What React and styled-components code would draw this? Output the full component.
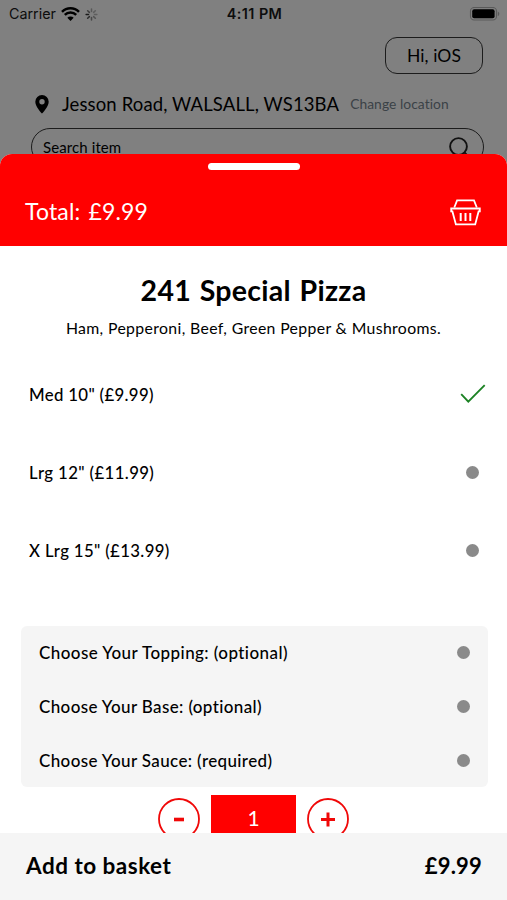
import styled, { createGlobalStyle } from 'styled-components';

const GlobalStyle = createGlobalStyle`
  * {
    box-sizing: border-box;
  }
  body {
    margin: 0;
    background: #808080;
  }
`

const Screen = styled.div`
  width: 507px;
  height: 900px;
  display: flex;
  flex-direction: column;
  overflow: hidden;
  background: #808080;
  color: #000;
  font-family: Lato, "Open Sans", sans-serif;
`

const Text = styled.span`
  font-size: ${p => p.$size}px;
  font-weight: ${p => p.$weight || 400};
  letter-spacing: ${p => p.$spacing || 0}px;
  word-spacing: ${p => p.$words || 0}px;
  line-height: 1.2;
  white-space: nowrap;
`

// dimmed page behind the sheet
const Backdrop = styled.div`
  height: 154px;
  flex: none;
  overflow: hidden;
  display: flex;
  flex-direction: column;
`

const StatusBar = styled.div`
  height: 28px;
  flex: none;
  padding: 0 7px 0 9px;
  display: grid;
  grid-template-columns: 1fr auto 1fr;
  align-items: center;
  font-family: Inter, sans-serif;
  color: #0d0d0d;
  svg {
    display: block;
  }
`

const Carrier = styled.div`
  display: flex;
  align-items: center;
  gap: 5px;
`

const Battery = styled.div`
  display: flex;
  justify-content: flex-end;
`

const Greeting = styled.div`
  width: 98px;
  height: 37px;
  flex: none;
  margin: 9px 24px 0 auto;
  border: 1.5px solid #1c1c1c;
  border-radius: 12px;
  display: flex;
  align-items: center;
  justify-content: center;
`

const Location = styled.div`
  height: 24px;
  flex: none;
  margin: 18px 0 0 35px;
  display: flex;
  align-items: center;
  svg {
    margin-right: 13px;
  }
`

const ChangeLink = styled(Text)`
  margin-left: 11px;
  color: #3b4247;
`

const Search = styled.div`
  width: 453px;
  height: 38px;
  flex: none;
  margin: 12px 0 0 31px;
  padding: 0 13px 0 11px;
  border: 1.5px solid #1c1c1c;
  border-radius: 19px;
  display: flex;
  align-items: center;
  justify-content: space-between;
`

const Placeholder = styled(Text)`
  line-height: 12px;
`

const Sheet = styled.div`
  flex: 1;
  min-height: 0;
  display: flex;
  flex-direction: column;
  border-radius: 12px 12px 0 0;
  overflow: hidden;
  background: #fff;
`

const SheetHeader = styled.div`
  height: 92px;
  flex: none;
  display: flex;
  flex-direction: column;
  align-items: center;
  padding-top: 9px;
  background: #f00;
  color: #fff;
`

const Handle = styled.div`
  width: 92px;
  height: 7px;
  border-radius: 4px;
  background: #fff;
`

const TotalRow = styled.div`
  width: 100%;
  height: 34px;
  margin-top: 25px;
  padding: 0 26px 0 25px;
  display: flex;
  align-items: center;
  justify-content: space-between;
`

const Content = styled.div`
  flex: 1;
  min-height: 0;
  overflow: hidden;
  display: flex;
  flex-direction: column;
`

const Intro = styled.div`
  height: 109px;
  flex: none;
  padding-top: 27px;
  display: flex;
  flex-direction: column;
  align-items: center;
  gap: 12px;
`

const Size = styled.div`
  height: 78px;
  flex: none;
  padding: 0 21px 0 29px;
  display: flex;
  align-items: center;
  justify-content: space-between;
`

const Label = styled(Text)`
  line-height: 20px;
  padding-top: 1px;
`

const Dot = styled.span`
  width: 13px;
  height: 13px;
  margin-right: ${p => p.$inset || 0}px;
  border-radius: 50%;
  background: #8a8a8a;
`

const Choices = styled.div`
  flex: none;
  width: 467px;
  height: 161px;
  margin: 37px 0 0 21px;
  border-radius: 6px;
  background: #f5f5f5;
`

const Choice = styled.div`
  height: 53.7px;
  padding: 0 18px;
  display: flex;
  align-items: center;
  justify-content: space-between;
`

const Quantity = styled.div`
  flex: none;
  margin-top: 8px;
  display: flex;
  justify-content: center;
  align-items: center;
  gap: 11px;
`

const Count = styled.div`
  width: 85px;
  height: 48px;
  padding-bottom: 2px;
  display: flex;
  align-items: center;
  justify-content: center;
  background: #f00;
  color: #fff;
`

const Footer = styled.div`
  height: 67px;
  flex: none;
  padding: 0 25px 1px 26px;
  display: flex;
  align-items: baseline;
  justify-content: space-between;
  line-height: 65px;
  background: #f5f5f5;
  span {
    line-height: inherit;
  }
`

const Wifi = () => (
  <svg width="19" height="14" viewBox="0 0 19 14">
    <path d="M9.5 14 6.3 10.7A4.6 4.6 0 0 1 12.7 10.7Z" fill="#000" />
    <path d="M3.8 7.8a8 8 0 0 1 11.4 0M1 4.8a12 12 0 0 1 17 0" fill="none" stroke="#000" strokeWidth="2.5" />
  </svg>
)

const Spinner = () => (
  <svg width="13" height="13" viewBox="-6.5 -6.5 13 13">
    {[0.35, 0.3, 0.3, 0.4, 0.5, 0.75, 0.9, 0.6].map((opacity, i) => (
      <path key={i} d="M0-3V-5.4" stroke="#111" strokeWidth="1.5" strokeLinecap="round" opacity={opacity} transform={`rotate(${i * 45})`} />
    ))}
  </svg>
)

const BatteryIcon = () => (
  <svg width="31" height="15" viewBox="0 0 31 15">
    <rect x="1.5" y="0.5" width="26" height="12.5" rx="3.6" fill="none" stroke="#5a5a5a" strokeWidth="1.1" />
    <rect x="3.2" y="2.2" width="22.4" height="9" rx="2" fill="#000" />
    <path d="M28.8 4.5c2 .8 2 3.8 0 4.6Z" fill="#5a5a5a" />
  </svg>
)

const Pin = () => (
  <svg width="14" height="19" viewBox="0 0 14 19">
    <path fillRule="evenodd" d="M7 0a6.7 6.7 0 0 0-6.7 6.7C.3 11.6 7 18.6 7 18.6s6.7-7 6.7-11.9A6.7 6.7 0 0 0 7 0Zm0 4.1a2.7 2.7 0 1 1 0 5.4 2.7 2.7 0 0 1 0-5.4Z" fill="#000" />
  </svg>
)

const SearchIcon = () => (
  <svg width="21" height="21" viewBox="0 0 21 21" fill="none" stroke="#111" strokeWidth="1.9">
    <circle cx="9.5" cy="9.5" r="8.4" />
    <path d="m15.5 15.5 4.6 4.6" />
  </svg>
)

const Basket = () => (
  <svg width="31" height="28" viewBox="0 0 31 28" fill="none" stroke="#fff" strokeWidth="1.8">
    <path d="M4.3 9.5 7.1 2.3H24l2.8 7.2" />
    <path d="M1.2 10.5H29.8V13.4H28.6L25.2 26.4H5.9L2.4 13.4H1.2Z" />
    <path d="M10.7 15.1v8M15.5 15.1v8M20.3 15.1v8" strokeWidth="2" />
  </svg>
)

const Check = () => (
  <svg width="26" height="20" viewBox="0 0 26 20" fill="none" stroke="#1c8224" strokeWidth="1.9">
    <path d="m1.2 10.2 7.1 7.4L24.7 1.2" />
  </svg>
)

const Stepper = ({plus}) => (
  <svg width="42" height="42" viewBox="0 0 42 42" fill="none" stroke="#f00808">
    <circle cx="21" cy="21" r="20" strokeWidth="1.8" />
    <path d={plus ? 'M14 21.5H28M21 14.5V28.5' : 'M16 21.5H26'} strokeWidth={plus ? 3 : 3.6} />
  </svg>
)

const sizes = [
  {label: 'Med 10" (£9.99)', spacing: 0.33, selected: true},
  {label: 'Lrg 12" (£11.99)', spacing: 0.37},
  {label: 'X Lrg 15" (£13.99)', spacing: 0.34},
]

const choices = [
  {label: 'Choose Your Topping: (optional)', spacing: 0.43},
  {label: 'Choose Your Base: (optional)', spacing: 0.37},
  {label: 'Choose Your Sauce: (required)', spacing: 0.37},
]

export default function App() {
  return (
    <>
      <GlobalStyle />
      <Screen>
        <Backdrop>
          <StatusBar>
            <Carrier>
              <Text $size={14.3}>Carrier</Text>
              <Wifi />
              <Spinner />
            </Carrier>
            <Text $size={14.4} $weight={600} $spacing={0.45}>4:11 PM</Text>
            <Battery><BatteryIcon /></Battery>
          </StatusBar>
          <Greeting><Text $size={17.5} $spacing={0.1}>Hi, iOS</Text></Greeting>
          <Location>
            <Pin />
            <Text $size={18.5} $spacing={0.12}>Jesson Road, WALSALL, WS13BA</Text>
            <ChangeLink $size={13.8} $spacing={0.07}>Change location</ChangeLink>
          </Location>
          <Search>
            <Placeholder $size={15} $spacing={0.1}>Search item</Placeholder>
            <SearchIcon />
          </Search>
        </Backdrop>
        <Sheet>
          <SheetHeader>
            <Handle />
            <TotalRow>
              <Text $size={23} $spacing={0.15} $words={2}>Total: £9.99</Text>
              <Basket />
            </TotalRow>
          </SheetHeader>
          <Content>
            <Intro>
              <Text $size={28.5} $weight={700} $spacing={0.27} $words={1.5}>241 Special Pizza</Text>
              <Text $size={15.8} $spacing={0.36}>Ham, Pepperoni, Beef, Green Pepper &amp; Mushrooms.</Text>
            </Intro>
            {sizes.map(({label, spacing, selected}) => (
              <Size key={label}>
                <Label $size={16.8} $weight={500} $spacing={spacing}>{label}</Label>
                {selected ? <Check /> : <Dot $inset={7} />}
              </Size>
            ))}
            <Choices>
              {choices.map(({label, spacing}) => (
                <Choice key={label}>
                  <Label $size={17} $weight={500} $spacing={spacing}>{label}</Label>
                  <Dot />
                </Choice>
              ))}
            </Choices>
            <Quantity>
              <Stepper />
              <Count><Text $size={21}>1</Text></Count>
              <Stepper plus />
            </Quantity>
          </Content>
          <Footer>
            <Text $size={22.5} $weight={700} $spacing={0.5}>Add to basket</Text>
            <Text $size={22} $weight={700} $spacing={0.2}>£9.99</Text>
          </Footer>
        </Sheet>
      </Screen>
    </>
  )
}
